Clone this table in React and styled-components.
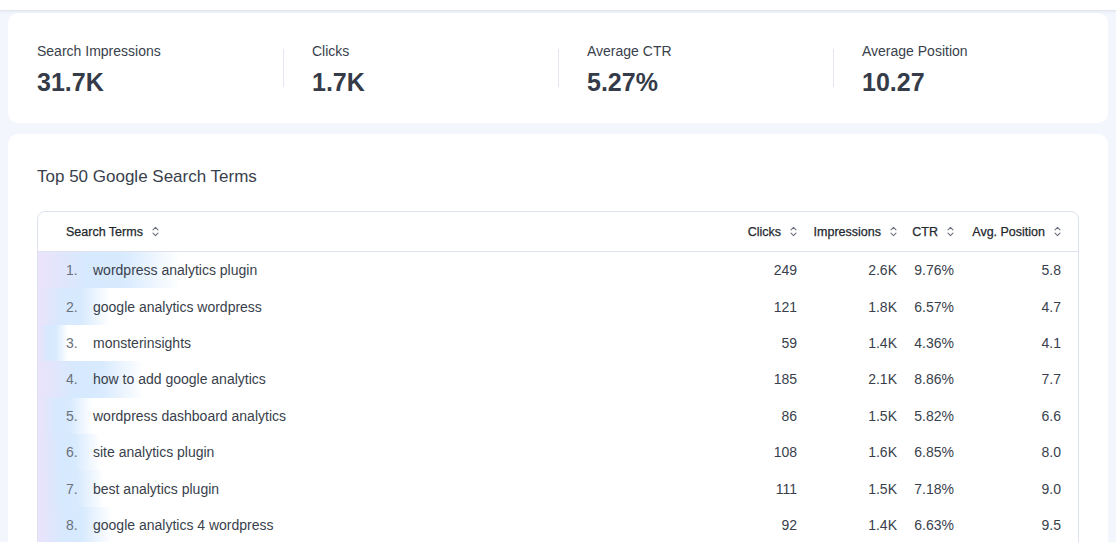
import React from "react";
import styled, { createGlobalStyle } from "styled-components";

const Global = createGlobalStyle`
  html, body { margin: 0; padding: 0; background: #f3f6fd; }
  body { font-family: "Liberation Sans", Arial, sans-serif; color: #393f4c; overflow: hidden; }
`;

const TopBar = styled.div`
  height: 10px;
  background: #ffffff;
  border-bottom: 1px solid #e2e6ef;
  box-shadow: 0 1px 2px rgba(30, 40, 80, 0.06);
`;

const Page = styled.div`
  display: flex;
  flex-direction: column;
  gap: 11px;
  padding: 2px 8px 0;
`;

const Card = styled.section`
  background: #ffffff;
  border-radius: 10px;
`;

const StatsCard = styled(Card)`
  height: 110px;
  box-sizing: border-box;
  padding-top: 4px;
  display: flex;
`;

const Stat = styled.div`
  flex: 1;
  display: flex;
  align-items: center;
  &::before {
    content: "";
    width: 1px;
    height: 38px;
    margin-top: -4px;
    margin-right: 28px;
    background: ${(p) => (p.$first ? "transparent" : "#e1e6ef")};
  }
`;

const StatBody = styled.div`
  display: flex;
  flex-direction: column;
  gap: 8px;
`;

const StatLabel = styled.div`
  font-size: 14px;
  line-height: 17px;
  color: #393f4c;
`;

const StatValue = styled.div`
  font-size: 25px;
  line-height: 29px;
  font-weight: 700;
  color: #353b48;
`;

const TermsCard = styled(Card)`
  padding: 33px 29px 0;
  height: 520px;
`;

const Title = styled.h2`
  margin: 0 0 24px;
  font-size: 17px;
  line-height: 20px;
  font-weight: 400;
  color: #393f4c;
`;

const Table = styled.div`
  border: 1px solid #dde3ee;
  border-radius: 8px;
  overflow: hidden;
  min-height: 400px;
`;

const cols = "1fr 51px 85px 42px 92px";

const HeadRow = styled.div`
  display: grid;
  grid-template-columns: ${cols};
  column-gap: 15px;
  align-items: center;
  height: 39px;
  padding: 0 17px 0 28px;
  border-bottom: 1px solid #dde3ee;
`;

const HeadCell = styled.div`
  display: flex;
  align-items: center;
  justify-content: ${(p) => (p.$left ? "flex-start" : "flex-end")};
  gap: 9px;
  font-size: 12.5px;
  color: #23282d;
  -webkit-text-stroke: 0.25px #23282d;
  white-space: nowrap;
`;

const Row = styled.div`
  position: relative;
  display: grid;
  grid-template-columns: ${cols};
  column-gap: 15px;
  align-items: center;
  height: 36.4px;
  padding: 0 17px 0 28px;
  font-size: 14px;
  color: #393f4c;
`;

const Bar = styled.div`
  position: absolute;
  left: 0;
  top: 0;
  bottom: 0;
  background: linear-gradient(
    90deg,
    #ebe3fb 0%,
    #d6e9fe 35%,
    #d8eafe 60%,
    rgba(255, 255, 255, 0) 100%
  );
`;

const Term = styled.div`
  position: relative;
  display: flex;
  white-space: nowrap;
`;

const Rank = styled.span`
  width: 27px;
  color: #6b717c;
`;

const Num = styled.div`
  position: relative;
  text-align: right;
  white-space: nowrap;
`;

const SortIcon = () => (
  <svg width="7" height="11" viewBox="0 0 7 11" fill="none">
    <path d="M1 3.8 L3.5 1.3 L6 3.8" stroke="#6b717c" strokeWidth="1.1" strokeLinecap="round" strokeLinejoin="round" />
    <path d="M1 7.2 L3.5 9.7 L6 7.2" stroke="#6b717c" strokeWidth="1.1" strokeLinecap="round" strokeLinejoin="round" />
  </svg>
);

const stats = [
  { label: "Search Impressions", value: "31.7K" },
  { label: "Clicks", value: "1.7K" },
  { label: "Average CTR", value: "5.27%" },
  { label: "Average Position", value: "10.27" },
];

const rows = [
  ["wordpress analytics plugin", "249", "2.6K", "9.76%", "5.8", 142],
  ["google analytics wordpress", "121", "1.8K", "6.57%", "4.7", 72],
  ["monsterinsights", "59", "1.4K", "4.36%", "4.1", 30],
  ["how to add google analytics", "185", "2.1K", "8.86%", "7.7", 106],
  ["wordpress dashboard analytics", "86", "1.5K", "5.82%", "6.6", 54],
  ["site analytics plugin", "108", "1.6K", "6.85%", "8.0", 62],
  ["best analytics plugin", "111", "1.5K", "7.18%", "9.0", 66],
  ["google analytics 4 wordpress", "92", "1.4K", "6.63%", "9.5", 74],
];

export default function App() {
  return (
    <>
      <Global />
      <TopBar />
      <Page>
        <StatsCard>
          {stats.map((s, i) => (
            <Stat key={s.label} $first={i === 0}>
              <StatBody>
                <StatLabel>{s.label}</StatLabel>
                <StatValue>{s.value}</StatValue>
              </StatBody>
            </Stat>
          ))}
        </StatsCard>
        <TermsCard>
          <Title>Top 50 Google Search Terms</Title>
          <Table>
            <HeadRow>
              <HeadCell $left>
                Search Terms <SortIcon />
              </HeadCell>
              <HeadCell>
                Clicks <SortIcon />
              </HeadCell>
              <HeadCell>
                Impressions <SortIcon />
              </HeadCell>
              <HeadCell>
                CTR <SortIcon />
              </HeadCell>
              <HeadCell>
                Avg. Position <SortIcon />
              </HeadCell>
            </HeadRow>
            {rows.map((r, i) => (
              <Row key={r[0]}>
                <Bar style={{ width: r[5] }} />
                <Term>
                  <Rank>{i + 1}.</Rank>
                  {r[0]}
                </Term>
                <Num>{r[1]}</Num>
                <Num>{r[2]}</Num>
                <Num>{r[3]}</Num>
                <Num>{r[4]}</Num>
              </Row>
            ))}
          </Table>
        </TermsCard>
      </Page>
    </>
  );
}
